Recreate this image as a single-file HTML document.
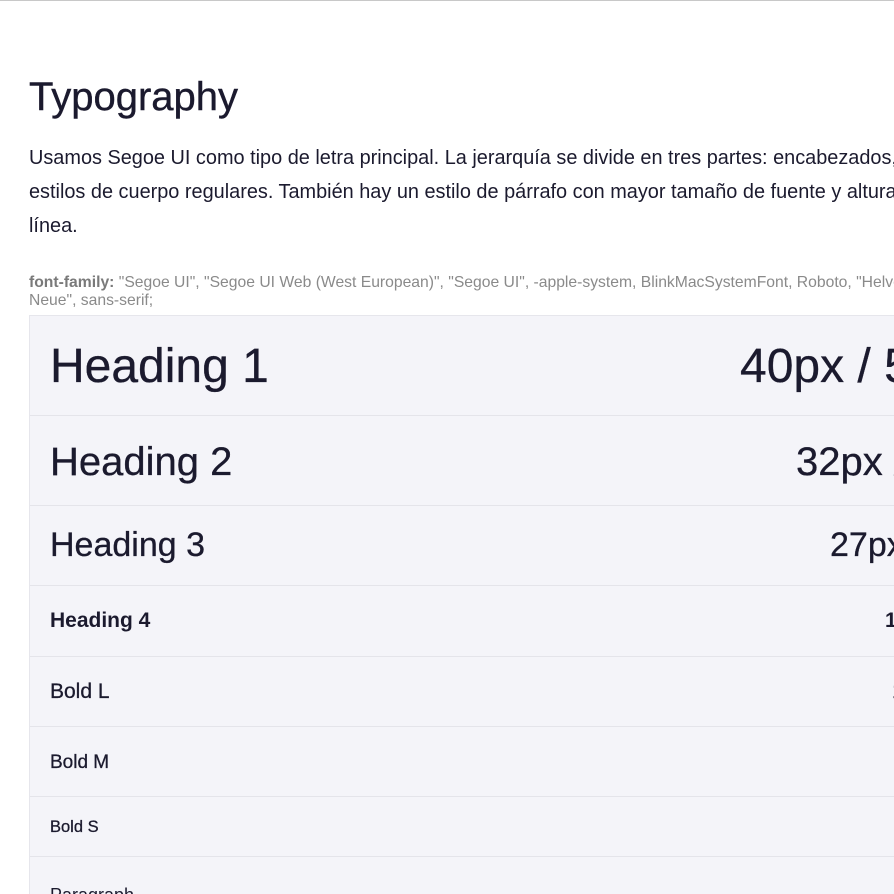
<!DOCTYPE html>
<html><head><meta charset="utf-8"><style>
html,body{margin:0;padding:0;width:894px;height:894px;overflow:hidden;background:#fff;}
body{font-family:"Liberation Sans",sans-serif;color:#1b1a2e;position:relative;border-top:1px solid #c8c8c8;box-sizing:border-box;}
.a{position:absolute;white-space:nowrap;}
h1{position:absolute;left:29px;top:71px;margin:0;font-size:40px;font-weight:normal;line-height:50px;-webkit-text-stroke:0.4px #1b1a2e;}
.p{left:29px;font-size:19.9px;line-height:34px;}
.ff{left:29px;font-size:15.7px;color:#8a8a8a;line-height:18px;}
.tbl{position:absolute;left:29px;top:314px;width:900px;height:600px;background:#f4f4f9;border:1px solid #e6e6ec;}
.r{position:absolute;left:0;width:900px;border-bottom:1px solid #e4e4ea;}
.l{position:absolute;left:20px;white-space:nowrap;}
.v{position:absolute;white-space:nowrap;}
.s{-webkit-text-stroke:0.3px #1b1a2e;}
</style></head><body>
<h1>Typography</h1>
<div class="a p" style="top:140px">Usamos Segoe UI como tipo de letra principal. La jerarquía se divide en tres partes: encabezados, títulos y</div>
<div class="a p" style="top:174px">estilos de cuerpo regulares. También hay un estilo de párrafo con mayor tamaño de fuente y altura de</div>
<div class="a p" style="top:208px">línea.</div>
<div class="a ff" style="top:273px"><b style="color:#7a7a7a">font-family:</b> "Segoe UI", "Segoe UI Web (West European)", "Segoe UI", -apple-system, BlinkMacSystemFont, Roboto, "Helvetica</div>
<div class="a ff" style="top:291px">Neue", sans-serif;</div>
<div class="tbl">
 <div class="r s" style="top:0;height:99px"><div class="l" style="top:24px;font-size:48px;line-height:54px">Heading 1</div><div class="v" style="left:710px;top:24px;font-size:48px;line-height:54px">40px / 56px</div></div>
 <div class="r s" style="top:100px;height:89px"><div class="l" style="top:23px;font-size:40px;line-height:46px">Heading 2</div><div class="v" style="left:766px;top:23px;font-size:40px;line-height:46px">32px / 40px</div></div>
 <div class="r s" style="top:190px;height:79px"><div class="l" style="top:19px;font-size:34px;line-height:40px">Heading 3</div><div class="v" style="left:800px;top:19px;font-size:34px;line-height:40px">27px / 36px</div></div>
 <div class="r" style="top:270px;height:70px"><div class="l" style="top:22px;font-size:21px;font-weight:bold;line-height:26px">Heading 4</div><div class="v" style="left:855px;top:22px;font-size:21px;font-weight:bold;line-height:26px">18px</div></div>
 <div class="r s" style="top:341px;height:69px"><div class="l" style="top:22px;font-size:21px;line-height:26px">Bold L</div><div class="v" style="left:862px;top:22px;font-size:21px;line-height:26px">16px</div></div>
 <div class="r s" style="top:411px;height:69px"><div class="l" style="top:24px;font-size:19px;line-height:24px">Bold M</div></div>
 <div class="r s" style="top:481px;height:59px"><div class="l" style="top:20px;font-size:16.5px;line-height:20px">Bold S</div></div>
 <div class="r" style="top:541px;height:80px;border:none"><div class="l" style="top:26px;font-size:18px;line-height:24px">Paragraph</div></div>
</div>
</body></html>
